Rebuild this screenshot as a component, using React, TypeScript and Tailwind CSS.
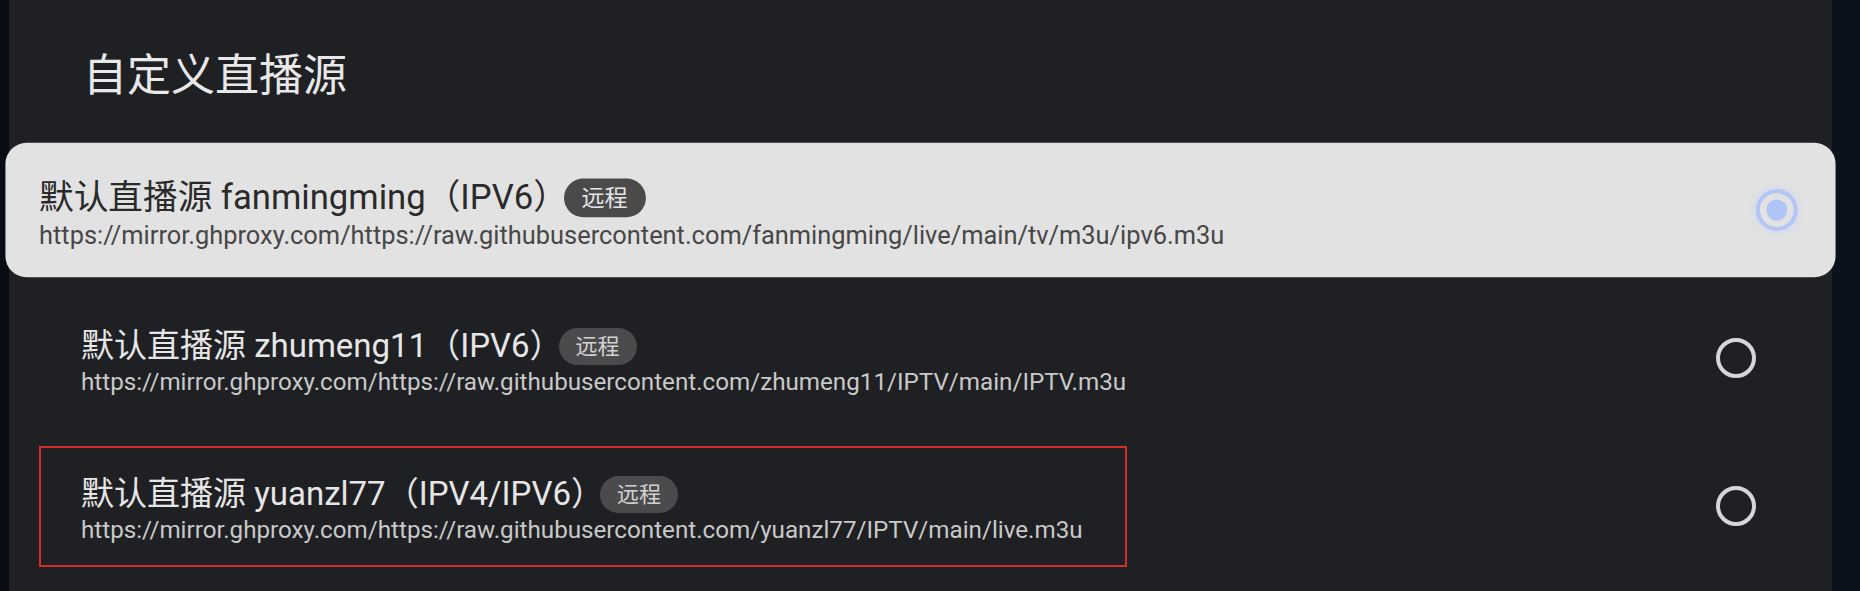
import React from 'react';

interface Source {
  name: string;
  url: string;
  tag: string;
}

const sources: Source[] = [
  {
    name: '默认直播源 fanmingming（IPV6）',
    url: 'https://mirror.ghproxy.com/https://raw.githubusercontent.com/fanmingming/live/main/tv/m3u/ipv6.m3u',
    tag: '远程',
  },
  {
    name: '默认直播源 zhumeng11（IPV6）',
    url: 'https://mirror.ghproxy.com/https://raw.githubusercontent.com/zhumeng11/IPTV/main/IPTV.m3u',
    tag: '远程',
  },
  {
    name: '默认直播源 yuanzl77（IPV4/IPV6）',
    url: 'https://mirror.ghproxy.com/https://raw.githubusercontent.com/yuanzl77/IPTV/main/live.m3u',
    tag: '远程',
  },
];

const font = { fontFamily: 'Roboto, "Noto Sans CJK SC", sans-serif' };

export default function App() {
  const selected = 0;
  const marked = 2;

  return (
    <div className="w-[1860px] h-[591px] flex bg-[#0a1019] overflow-hidden" style={font}>
      <div className="w-[9px] shrink-0 bg-[#080d15]" />

      {/* Settings panel */}
      <div className="flex-1 bg-[#1f2023] px-[40px] pt-[50px]">
        <h1 className="pl-[34px] text-[44px] leading-[53px] text-[#e8e8e8] font-normal">自定义直播源</h1>

        <div className="mt-[43px] flex flex-col gap-[20px]">
          {sources.map((s, i) => {
            const active = i === selected;
            return (
              <div
                key={s.url}
                className={`relative h-[128px] flex items-center justify-between pl-[32px] pr-[36px] rounded-[20px] ${
                  active ? 'bg-[#e2e2e2] scale-[1.05]' : ''
                }`}
              >
                <div className="mt-[8px]">
                  <div className="flex items-center">
                    <span className={`text-[33px] leading-[40px] ${active ? 'text-[#2a2a2a]' : 'text-[#e6e6e6]'}`}>
                      {s.name}
                    </span>
                    <span
                      className={`ml-[-4px] h-[37px] px-[17px] rounded-full flex items-center text-[22px] ${
                        active ? 'bg-[#4a4a4b] text-[#e4e4e4]' : 'bg-[#4b4b4d] text-[#d2d2d2]'
                      }`}
                    >
                      {s.tag}
                    </span>
                  </div>
                  <div className={`text-[24.2px] leading-[32px] ${active ? 'text-[#474747]' : 'text-[#c9c9c9]'}`}>
                    {s.url}
                  </div>
                </div>

                {active ? (
                  <div className="w-[40px] h-[40px] rounded-full border-[4px] border-[#b3c6f6] flex items-center justify-center shadow-[0_0_6px_2px_rgba(190,210,255,0.45)]">
                    <div className="w-[20px] h-[20px] rounded-full bg-[#b0c4f7]" />
                  </div>
                ) : (
                  <div className="w-[40px] h-[40px] rounded-full border-[4px] border-[#d6d6d6]" />
                )}

                {i === marked && (
                  <div className="absolute left-[-10px] top-[4px] w-[1088px] h-[121px] border-2 border-[#d42b2b] pointer-events-none" />
                )}
              </div>
            );
          })}
        </div>
      </div>

      <div className="w-[28px] shrink-0 bg-[#0b121d]" />
    </div>
  );
}
